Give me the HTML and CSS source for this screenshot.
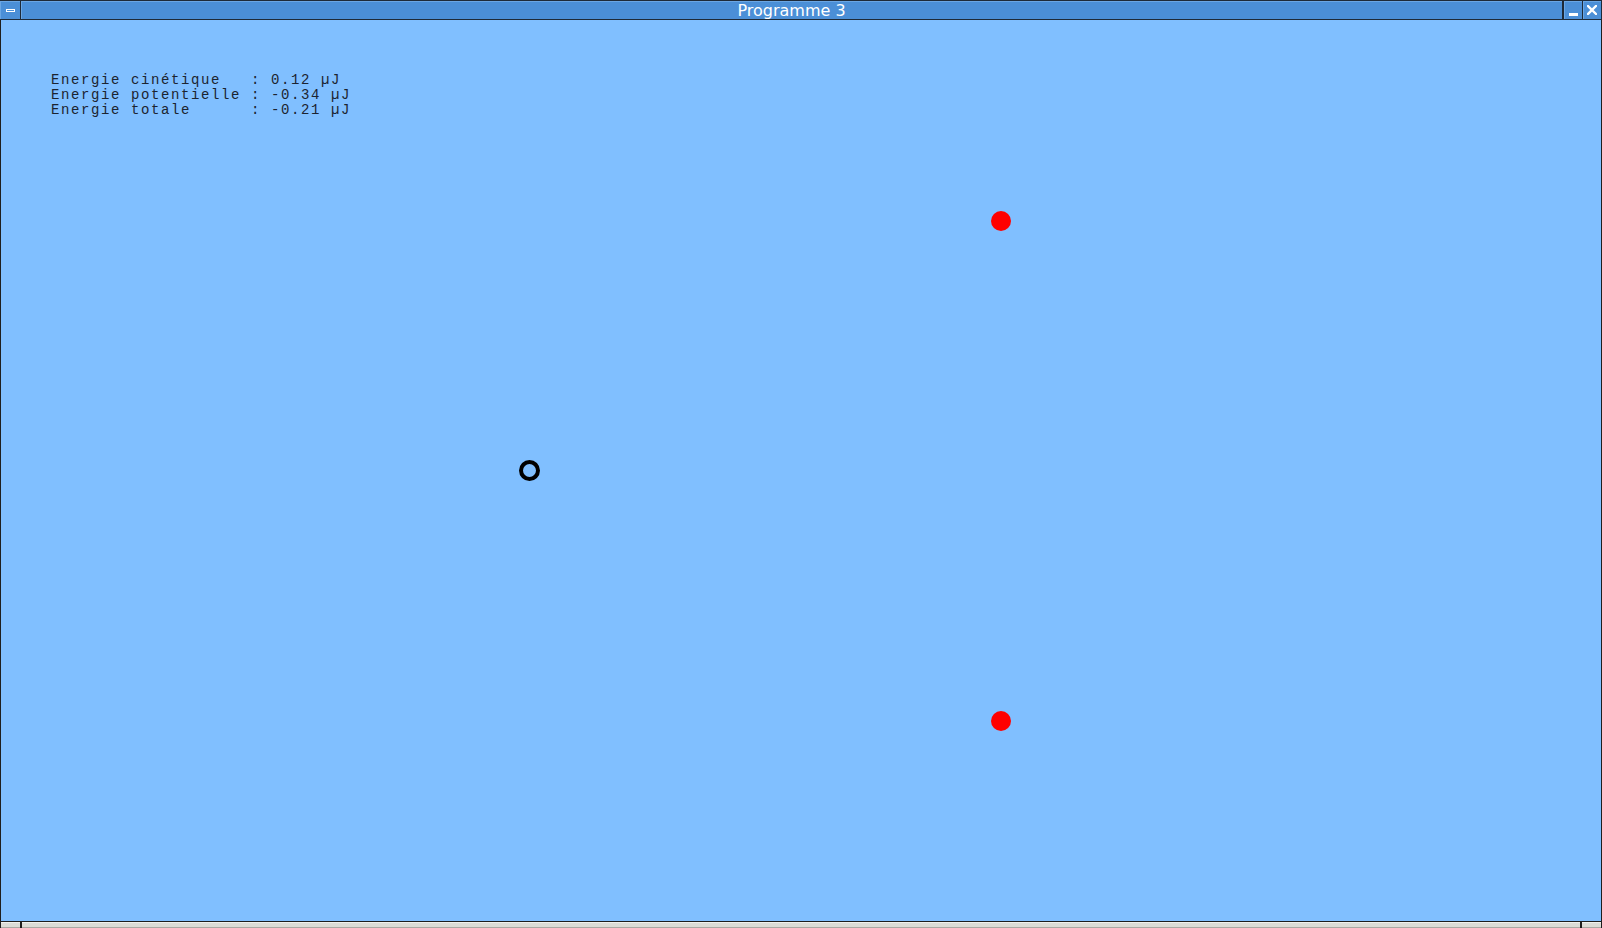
FILE: index.html
```html
<!DOCTYPE html>
<html lang="fr">
<head>
<meta charset="utf-8">
<title>Programme 3</title>
<link rel="stylesheet" href="styles.css">
</head>
<body>
<div class="window">
  <div class="titlebar">
    <div class="tbtn menu-btn"><span class="menu-icon"></span></div>
    <div class="title">Programme 3</div>
    <div class="tbtn min-btn"><span class="min-icon"></span></div>
    <div class="tbtn close-btn">
      <svg width="10" height="10" viewBox="0 0 10 10"><path d="M1 1 L9 9 M9 1 L1 9" stroke="#fff" stroke-width="2.4" stroke-linecap="square"/></svg>
    </div>
  </div>
  <div class="canvas">
    <pre class="energy">Energie cinétique   : 0.12 µJ
Energie potentielle : -0.34 µJ
Energie totale      : -0.21 µJ</pre>
    <div class="charge red" style="left:990px;top:191px"></div>
    <div class="charge red" style="left:990px;top:691px"></div>
    <div class="charge ring" style="left:518px;top:440px"></div>
  </div>
  <div class="resizebar">
    <div class="grip grip-left"></div>
    <div class="grip grip-mid"></div>
    <div class="grip grip-right"></div>
  </div>
</div>
</body>
</html>
```

FILE: styles.css
```css
html, body {
  margin: 0;
  padding: 0;
  background: #1b1b1b;
}

.window {
  width: 1602px;
  height: 928px;
  display: flex;
  flex-direction: column;
  background: #1e1e1e;
}

.titlebar {
  height: 18px;
  display: flex;
  gap: 1px;
  padding: 1px 1px 1px 0;
  background: #1e2a38;
}

.tbtn {
  background: #4b8fd7;
  box-shadow: inset 1px 1px 0 #6aa6e4;
  display: flex;
  align-items: center;
  justify-content: center;
}

.menu-btn {
  width: 20px;
}

.menu-icon {
  width: 7px;
  height: 1px;
  border: 1px solid #fff;
  margin-top: 1px;
}

.title {
  flex: 1;
  background: #4b8fd7;
  box-shadow: inset 1px 1px 0 #6aa6e4;
  color: #fff;
  font-family: "DejaVu Sans", sans-serif;
  font-size: 16px;
  line-height: 20px;
  height: 18px;
  overflow: hidden;
  text-align: center;
}

.min-btn {
  width: 18px;
  margin-left: 1px;
}

.min-icon {
  width: 9px;
  height: 3px;
  background: #fff;
  margin-top: 8px;
}

.close-btn {
  width: 18px;
}

.canvas {
  flex: 1;
  position: relative;
  background: #80bfff;
  margin: 0 1px;
  padding: 53px 0 0 50px;
}

.energy {
  margin: 0;
  font-family: "Liberation Mono", "Courier New", monospace;
  font-size: 14px;
  line-height: 15px;
  letter-spacing: 1.6px;
  color: #1c2430;
}

.charge {
  position: absolute;
  width: 20px;
  height: 20px;
  border-radius: 50%;
  box-sizing: border-box;
}

.red {
  background: #ff0000;
}

.ring {
  width: 21px;
  height: 21px;
  border: 4px solid #000;
}

.resizebar {
  height: 6px;
  display: flex;
  gap: 2px;
  border-top: 1px solid #1e1e1e;
}

.grip {
  background: #dcdcd6;
  box-shadow: inset 0 1px 0 #f2f2ee, inset 0 -1px 0 #a9a9a3;
}

.grip-left {
  width: 19px;
  margin-left: 1px;
}

.grip-mid {
  flex: 1;
}

.grip-right {
  width: 19px;
  margin-right: 1px;
}
```
